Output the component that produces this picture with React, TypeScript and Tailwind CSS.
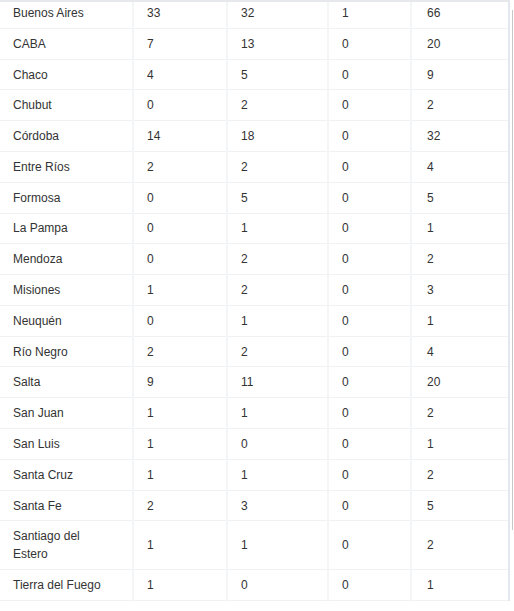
type Row = {
  province: string;
  a: number;
  b: number;
  c: number;
  total: number;
};

const rows: Row[] = [
  { province: "Buenos Aires", a: 33, b: 32, c: 1, total: 66 },
  { province: "CABA", a: 7, b: 13, c: 0, total: 20 },
  { province: "Chaco", a: 4, b: 5, c: 0, total: 9 },
  { province: "Chubut", a: 0, b: 2, c: 0, total: 2 },
  { province: "Córdoba", a: 14, b: 18, c: 0, total: 32 },
  { province: "Entre Ríos", a: 2, b: 2, c: 0, total: 4 },
  { province: "Formosa", a: 0, b: 5, c: 0, total: 5 },
  { province: "La Pampa", a: 0, b: 1, c: 0, total: 1 },
  { province: "Mendoza", a: 0, b: 2, c: 0, total: 2 },
  { province: "Misiones", a: 1, b: 2, c: 0, total: 3 },
  { province: "Neuquén", a: 0, b: 1, c: 0, total: 1 },
  { province: "Río Negro", a: 2, b: 2, c: 0, total: 4 },
  { province: "Salta", a: 9, b: 11, c: 0, total: 20 },
  { province: "San Juan", a: 1, b: 1, c: 0, total: 2 },
  { province: "San Luis", a: 1, b: 0, c: 0, total: 1 },
  { province: "Santa Cruz", a: 1, b: 1, c: 0, total: 2 },
  { province: "Santa Fe", a: 2, b: 3, c: 0, total: 5 },
  { province: "Santiago del Estero", a: 1, b: 1, c: 0, total: 2 },
  { province: "Tierra del Fuego", a: 1, b: 0, c: 0, total: 1 },
];

const cell =
  "border-r-2 border-r-[#f4f5f7] px-[13px] py-[5.9px] align-middle leading-[18px]";

export default function App() {
  return (
    <div
      className="relative h-[611px] w-[514px] overflow-hidden bg-white text-[12px] text-[#333]"
      style={{ fontFamily: '"Liberation Sans", Arial, sans-serif' }}
    >
      <div className="w-[510px] border-t-2 border-r-2 border-t-[#e6e8eb] border-r-[#e3e7ee]">
        <table className="w-[508px] table-fixed border-collapse [&_tr:first-child_td]:pt-[2px]">
          <colgroup>
            <col className="w-[133px]" />
            <col className="w-[94px]" />
            <col className="w-[101px]" />
            <col className="w-[83px]" />
            <col className="w-[97px]" />
          </colgroup>
          <tbody>
            {rows.map((r) => (
              <tr key={r.province} className="border-b border-[#f0f1f3]">
                <td className={`${cell} pr-[22px]`}>{r.province}</td>
                <td className={cell}>{r.a}</td>
                <td className={cell}>{r.b}</td>
                <td className={cell}>{r.c}</td>
                <td className="px-[15px] py-[5.9px] align-middle leading-[18px]">
                  {r.total}
                </td>
              </tr>
            ))}
          </tbody>
        </table>
      </div>
      <div className="absolute top-[10px] left-[512px] h-[520px] w-px bg-[#c9c9c9]" />
    </div>
  );
}
